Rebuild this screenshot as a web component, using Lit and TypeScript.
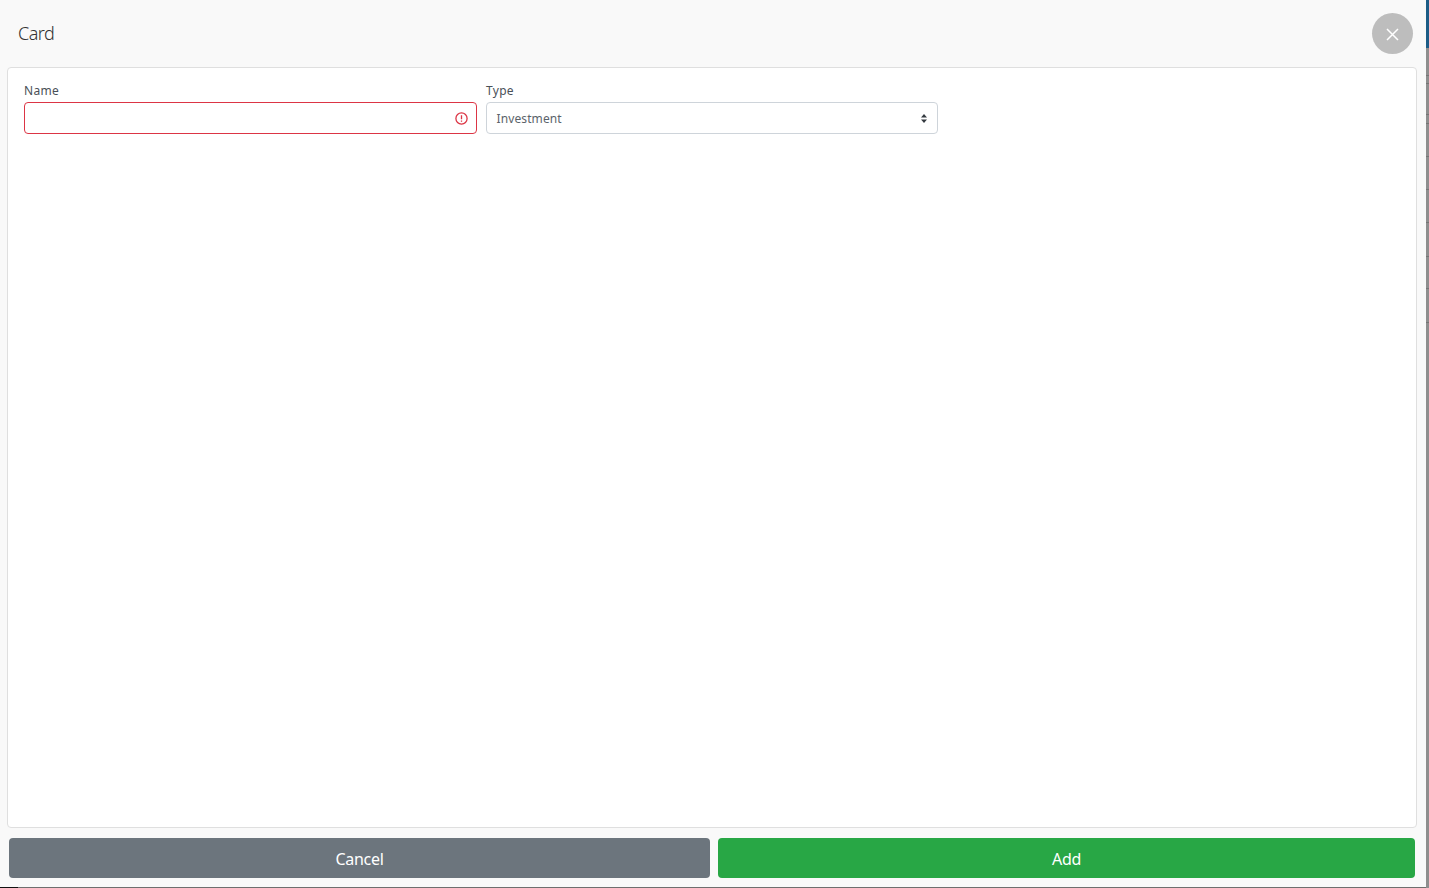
import { LitElement, html, css } from "lit";
import { customElement } from "lit/decorators.js";

// darker hairlines in the page peeking out behind the dialog
const STRIP_LINES = [75, 83, 114, 123, 156, 189, 222, 256, 288, 322];

@customElement("app-root")
export class AppRoot extends LitElement {
  static styles = css`
    :host {
      display: flex;
      width: 1429px;
      height: 888px;
      overflow: hidden;
      font-family: "Noto Sans", "Open Sans", sans-serif;
      color: #212529;
    }

    .main {
      width: 1426px;
      display: flex;
      flex-direction: column;
    }

    .modal {
      box-sizing: border-box;
      height: 887px;
      flex: none;
      display: flex;
      flex-direction: column;
      background: #f9f9f9;
      padding: 0 9px 9px 7px;
    }

    .bottom {
      flex: 1;
      background: #6e6e6e;
    }

    .bottom div {
      width: 18px;
      height: 100%;
      background: #111;
    }

    .strip {
      width: 3px;
      display: flex;
      flex-direction: column;
      background: #8e8e8e;
    }

    .strip .blue {
      height: 48px;
      background: #1c5c86;
    }

    .strip .line {
      box-sizing: border-box;
      border-bottom: 1px solid #757575;
    }

    .header {
      height: 67px;
      flex: none;
      display: flex;
      align-items: center;
      justify-content: space-between;
      padding: 0 4px 0 11px;
    }

    .title {
      font-size: 18px;
      font-weight: 300;
      line-height: 22px;
      margin-top: -2px;
      letter-spacing: -0.5px;
      color: #333;
    }

    .close {
      width: 41px;
      height: 41px;
      border: 0;
      padding: 1px 0 0;
      border-radius: 50%;
      background: #bdbdbd;
      display: flex;
      align-items: center;
      justify-content: center;
    }

    .card {
      flex: 1;
      box-sizing: border-box;
      background: #fff;
      border: 1px solid #dfdfdf;
      border-radius: 4px;
      padding: 14px 16px;
      display: grid;
      grid-template-columns: 453px 452px;
      column-gap: 9px;
      align-content: start;
    }

    label {
      display: block;
      font-size: 12px;
      line-height: 18px;
      height: 20px;
      letter-spacing: 0.3px;
      color: #495057;
    }

    .control {
      box-sizing: border-box;
      height: 32px;
      border: 1px solid #ced4da;
      border-radius: 4px;
      display: flex;
      align-items: center;
      justify-content: space-between;
      padding: 0 10px 0 9.6px;
      font-size: 12px;
      color: #5b636b;
      letter-spacing: 0.1px;
    }

    .control.invalid {
      border-color: #dc3545;
      padding-right: 8px;
    }

    .footer {
      flex: none;
      display: flex;
      gap: 8px;
      padding: 10px 2px 0;
    }

    .btn {
      height: 40px;
      border: 0;
      border-radius: 4px;
      color: #fff;
      font: inherit;
      font-size: 16px;
      line-height: 22px;
      padding: 1px 0 0;
      letter-spacing: -0.3px;
    }

    .cancel {
      width: 701px;
      background: #6c757d;
    }

    .add {
      flex: 1;
      background: #28a745;
    }
  `;

  private renderStrip() {
    let prev = 48;
    return STRIP_LINES.map((y) => {
      const h = y + 1 - prev;
      prev = y + 1;
      return html`<div class="line" style="height:${h}px"></div>`;
    });
  }

  render() {
    return html`
      <div class="main">
        <div class="modal">
          <div class="header">
            <div class="title">Card</div>
            <button class="close">
              <svg width="13" height="13" viewBox="0 0 13 13" fill="none" stroke="#fff" stroke-width="1.5">
                <path d="M1 1l11 11M12 1L1 12" />
              </svg>
            </button>
          </div>
          <div class="card">
            <div>
              <label>Name</label>
              <div class="control invalid">
                <span></span>
                <svg width="13" height="13" viewBox="0 0 13 13" fill="none" stroke="#dc3545">
                  <circle cx="6.5" cy="6.5" r="5.6" stroke-width="1.3" />
                  <path d="M6.5 3.2v4M6.5 8.6v1.2" stroke-width="1.3" />
                </svg>
              </div>
            </div>
            <div>
              <label>Type</label>
              <div class="control">
                <span>Investment</span>
                <svg width="6" height="9" viewBox="0 0 6 9" fill="#343a40">
                  <path d="M3 0l3 3.4H0zM3 9L0 5.6h6z" />
                </svg>
              </div>
            </div>
          </div>
          <div class="footer">
            <button class="btn cancel">Cancel</button>
            <button class="btn add">Add</button>
          </div>
        </div>
        <div class="bottom"><div></div></div>
      </div>
      <div class="strip">
        <div class="blue"></div>
        ${this.renderStrip()}
      </div>
    `;
  }
}
